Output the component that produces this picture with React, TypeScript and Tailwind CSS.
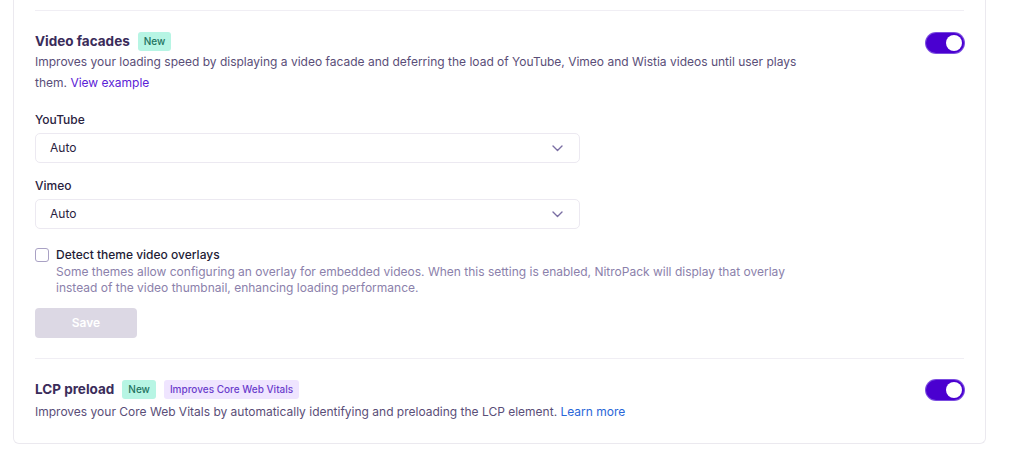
import React from "react";

function Toggle() {
  return (
    <div className="flex h-[20px] w-[38px] items-center justify-end rounded-full bg-[#4a00d0] p-[2px] ring-1 ring-[#7b4de0]">
      <div className="h-[16px] w-[16px] rounded-full bg-white" />
    </div>
  );
}

function Badge({ children, tone }: { children: React.ReactNode; tone: "mint" | "violet" }) {
  const cls =
    tone === "mint"
      ? "bg-[#b7f5e4] text-[#22735f]"
      : "bg-[#efe5ff] text-[#6b3dcc]";
  return (
    <span className={`inline-flex h-[19px] items-center rounded-[3px] px-[6px] text-[10px] font-medium leading-none ${cls}`}>
      {children}
    </span>
  );
}

function Chevron() {
  return (
    <svg width="11" height="7" viewBox="0 0 11 7" fill="none">
      <path d="M1 1l4.5 4.5L10 1" stroke="#7a6ea3" strokeWidth="1.4" strokeLinecap="round" strokeLinejoin="round" />
    </svg>
  );
}

function Select({ label }: { label: string }) {
  return (
    <div className="flex flex-col">
      <div className="text-[12px] font-medium leading-5 text-[#2a2240]">{label}</div>
      <div className="mt-[3px] flex h-[30px] w-[545px] items-center justify-between rounded-[5px] border border-[#ece9f1] bg-white pl-[14px] pr-[16px]">
        <span className="text-[12px] text-[#2a2240]">Auto</span>
        <Chevron />
      </div>
    </div>
  );
}

export default function App() {
  return (
    <div className="min-h-[471px] bg-white pl-[13px] pr-[38px] pb-[28px]" style={{ fontFamily: "Inter, 'Noto Sans', sans-serif" }}>
      <div className="rounded-b-[6px] border-x border-b border-[#ebe9ef] bg-white px-[21px] pt-[10px]">
        <div className="border-t border-[#f0eef4]" />
        {/* Video facades */}
        <div className="flex items-start justify-between pt-[20px] pb-[20px]">
          <div className="flex flex-col">
            <div className="flex h-5 items-center gap-2">
              <h3 className="text-[13.5px] font-bold leading-5 text-[#3a2c5a]">Video facades</h3>
              <Badge tone="mint">New</Badge>
            </div>
            <p className="max-w-[775px] text-[12px] leading-[21px] text-[#5a4e78]">
              Improves your loading speed by displaying a video facade and deferring the load of YouTube, Vimeo and Wistia videos until user plays them.{" "}
              <a className="text-[#5b22d6]">View example</a>
            </p>
            <div className="mt-[17px] flex flex-col gap-[13px]">
              <Select label="YouTube" />
              <Select label="Vimeo" />
            </div>
            <div className="mt-[17px] flex items-start gap-[7px]">
              <div className="mt-[2px] h-[14px] w-[14px] shrink-0 rounded-[3px] border border-[#a9a1c4] bg-white" />
              <div className="flex flex-col">
                <div className="text-[12px] font-medium leading-[18px] text-[#231c36]">Detect theme video overlays</div>
                <p className="max-w-[740px] text-[12px] leading-4 text-[#8b81ab]">
                  Some themes allow configuring an overlay for embedded videos. When this setting is enabled, NitroPack will display that overlay instead of the video thumbnail, enhancing loading performance.
                </p>
              </div>
            </div>
            <button className="mt-[12px] h-[30px] w-[102px] rounded-[4px] bg-[#dcd8e4] text-[12px] font-semibold text-white">
              Save
            </button>
          </div>
          <div className="pt-[2px]">
            <Toggle />
          </div>
        </div>
        <div className="border-t border-[#f0eef4]" />
        {/* LCP preload */}
        <div className="flex items-start justify-between pt-[20px] pb-[21px]">
          <div className="flex flex-col">
            <div className="flex h-5 items-center gap-2">
              <h3 className="text-[13.5px] font-bold leading-5 text-[#3a2c5a]">LCP preload</h3>
              <Badge tone="mint">New</Badge>
              <Badge tone="violet">Improves Core Web Vitals</Badge>
            </div>
            <p className="mt-[3px] text-[12px] leading-5 text-[#5a4e78]">
              Improves your Core Web Vitals by automatically identifying and preloading the LCP element.{" "}
              <a className="text-[#2a66d8]">Learn more</a>
            </p>
          </div>
          <div className="pt-[1px]">
            <Toggle />
          </div>
        </div>
      </div>
    </div>
  );
}
